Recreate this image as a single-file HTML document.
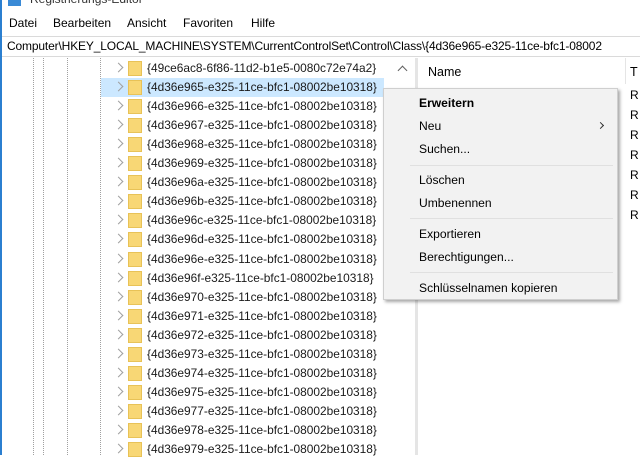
<!DOCTYPE html>
<html><head><style>
*{margin:0;padding:0;box-sizing:border-box}
body{width:640px;height:455px;overflow:hidden;background:#fff;font-family:"Liberation Sans",sans-serif;font-size:12px;color:#000;position:relative}
.abs{position:absolute}
.row{position:absolute;left:101px;height:19px;width:283px}
.row .chev{position:absolute;left:14px;top:5px;width:7px;height:7px;border-right:1.3px solid #a0a0a0;border-bottom:1.3px solid #a0a0a0;transform:rotate(-45deg)}
.row .fold{position:absolute;left:27px;top:2px;width:14px;height:15px;background:#f8d775;border:1px solid #e8c257}
.row .t{position:absolute;left:46px;top:2px;font-size:11.9px;white-space:nowrap;color:#1a1a1a}
.vl{position:absolute;top:58px;height:397px;border-left:1px dotted #a0a0a0}
.mi{position:absolute;left:35px;font-size:12.1px}
.sep{position:absolute;left:26px;right:4px;height:1px;background:#e0e0e0}
.R{position:absolute;left:630px;font-size:12px}
</style></head><body>
<div class="abs" style="left:0;top:0;width:640px;height:12px;background:#fff"></div>
<div class="abs" style="left:8px;top:-6px;width:13px;height:12px;background:#3a8ad6"></div>
<div class="abs" style="left:30px;top:-8px;font-size:12px;color:#333">Registrierungs-Editor</div>
<div class="abs" style="left:0;top:0;width:2px;height:455px;background:#2b7fd0"></div>
<div class="abs" style="left:9px;top:16px;font-size:12px">Datei</div>
<div class="abs" style="left:53px;top:16px">Bearbeiten</div>
<div class="abs" style="left:127px;top:16px">Ansicht</div>
<div class="abs" style="left:183px;top:16px">Favoriten</div>
<div class="abs" style="left:251px;top:16px">Hilfe</div>
<div class="abs" style="left:2px;top:36px;width:640px;height:21px;border-top:1px solid #dadada;border-bottom:1px solid #dadada;background:#fff"></div>
<div class="abs" style="left:7px;top:39px;font-size:12px;white-space:nowrap;letter-spacing:-0.15px">Computer\HKEY_LOCAL_MACHINE\SYSTEM\CurrentControlSet\Control\Class\{4d36e965-e325-11ce-bfc1-08002</div>
<div class="vl" style="left:33px"></div>
<div class="vl" style="left:43px"></div>
<div class="vl" style="left:67px"></div>
<div class="vl" style="left:100px"></div>
<div class="abs" style="left:101px;top:78px;width:283px;height:19px;background:#cce8ff"></div>
<div id="tree"></div>
<div class="abs" style="left:399px;top:67px;width:7px;height:7px;border-left:1.5px solid #606060;border-top:1.5px solid #606060;transform:rotate(45deg)"></div>
<div class="abs" style="left:415px;top:58px;width:3px;height:397px;background:#e5e5e5"></div>
<div class="abs" style="left:428px;top:65px;font-size:12.5px">Name</div>
<div class="abs" style="left:625px;top:58px;width:1px;height:26px;background:#e5e5e5"></div>
<div class="abs" style="left:630px;top:65px;font-size:12.5px">T</div>
<div class="abs" style="left:430px;top:88px;width:14px;height:8px;border:1px solid #aaa;border-bottom:none"></div>
<div class="R" style="top:88px">R</div><div class="R" style="top:108px">R</div><div class="R" style="top:128px">R</div><div class="R" style="top:148px">R</div><div class="R" style="top:168px">R</div><div class="R" style="top:188px">R</div><div class="R" style="top:208px">R</div>
<div class="abs" style="left:383px;top:88px;width:235px;height:212px;background:#f2f2f2;border:1px solid #cfcfcf;box-shadow:2px 2px 3px rgba(0,0,0,0.35)">
<div class="mi" style="top:7px;font-weight:bold">Erweitern</div>
<div class="mi" style="top:30px">Neu</div>
<div class="abs" style="left:214px;top:34px;width:5px;height:5px;border-right:1px solid #333;border-bottom:1px solid #333;transform:rotate(-45deg)"></div>
<div class="mi" style="top:53px">Suchen...</div>
<div class="sep" style="top:76px"></div>
<div class="mi" style="top:84px">Löschen</div>
<div class="mi" style="top:107px">Umbenennen</div>
<div class="sep" style="top:129px"></div>
<div class="mi" style="top:138px">Exportieren</div>
<div class="mi" style="top:161px">Berechtigungen...</div>
<div class="sep" style="top:183px"></div>
<div class="mi" style="top:192px">Schlüsselnamen kopieren</div>
</div>
<script>
var n=["{49ce6ac8-6f86-11d2-b1e5-0080c72e74a2}"];
["965","966","967","968","969","96a","96b","96c","96d","96e","96f","970","971","972","973","974","975","977","978","979"].forEach(function(s){n.push("{4d36e"+s+"-e325-11ce-bfc1-08002be10318}")});
var h="";n.forEach(function(t,i){var y=59+i*19.05;h+='<div class="row" style="top:'+y+'px"><div class="chev"></div><div class="fold"></div><div class="t">'+t+'</div></div>'});
document.getElementById("tree").innerHTML=h;
</script>
</body></html>
